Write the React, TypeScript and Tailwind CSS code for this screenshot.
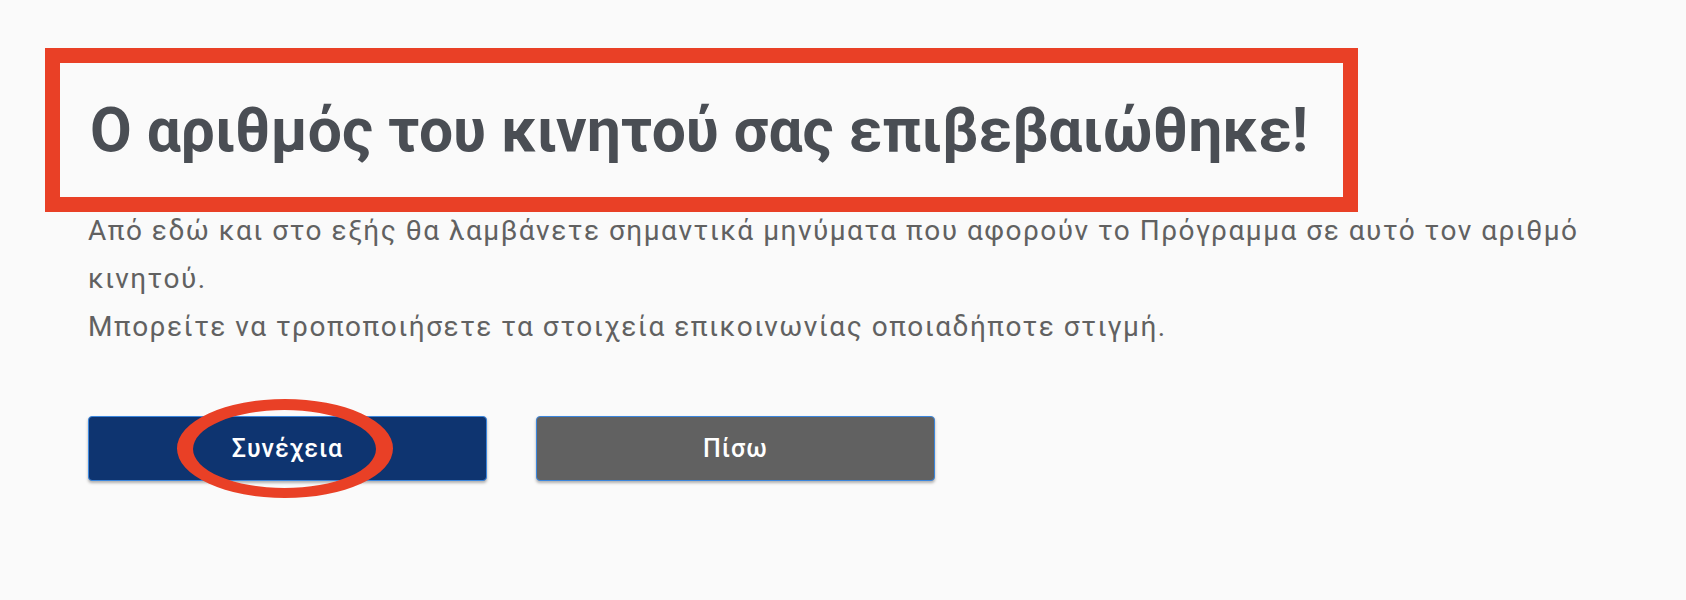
import React from "react";

export default function App() {
  return (
    <div className="min-h-[600px] bg-[#fafafa] px-[88px] pt-[95px] font-['Roboto','Noto_Sans',sans-serif]">
      <div className="relative">
        <h1 className="pl-[2px] text-[60.5px] font-bold leading-[72px] text-[#4a4e54]">
          Ο αριθμός του κινητού σας επιβεβαιώθηκε!
        </h1>
        <div className="pointer-events-none absolute left-[-43px] top-[-47px] h-[164px] w-[1313px] border-[15px] border-[#e94026]" />
      </div>
      <div className="mt-[40px] text-[28px] leading-[48px] tracking-[1.5px] text-[#616161]">
        <p>
          Από εδώ και στο εξής θα λαμβάνετε σημαντικά μηνύματα που αφορούν το Πρόγραμμα σε αυτό τον αριθμό κινητού.
        </p>
        <p>Μπορείτε να τροποποιήσετε τα στοιχεία επικοινωνίας οποιαδήποτε στιγμή.</p>
      </div>
      <div className="mt-[65px] flex gap-[49px]">
        <div className="relative">
          <button className="flex h-[65px] w-[399px] items-center justify-center rounded-[4px] border border-[#3b86dd] bg-[#0e3470] text-[25px] font-medium tracking-[1px] text-white shadow-[0_2px_3px_rgba(0,0,0,0.3)]">
            Συνέχεια
          </button>
          <svg
            className="pointer-events-none absolute left-[89px] top-[-17px]"
            width="216"
            height="99"
            viewBox="0 0 216 99"
          >
            <path
              fillRule="evenodd"
              fill="#e94026"
              d="M0 49.5 A108 49.5 0 1 0 216 49.5 A108 49.5 0 1 0 0 49.5 Z M16 50 A91.5 39 0 1 0 199 50 A91.5 39 0 1 0 16 50 Z"
            />
          </svg>
        </div>
        <button className="flex h-[65px] w-[399px] items-center justify-center rounded-[4px] border border-[#3b86dd] bg-[#616161] text-[25px] font-medium tracking-[1px] text-white shadow-[0_2px_3px_rgba(0,0,0,0.3)]">
          Πίσω
        </button>
      </div>
    </div>
  );
}
